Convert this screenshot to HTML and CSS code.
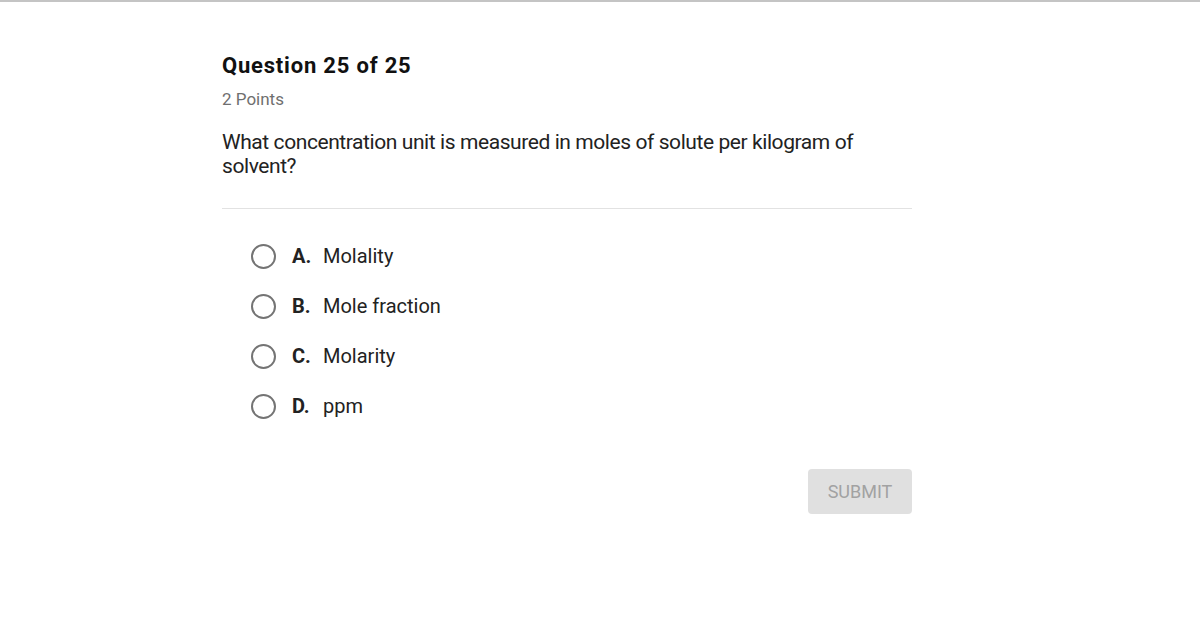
FILE: index.html
```html
<!DOCTYPE html>
<html>
<head>
<meta charset="utf-8">
<link rel="stylesheet" href="styles.css">
</head>
<body>
<div class="topline"></div>
<main class="quiz">
  <h1 class="title">Question 25 of 25</h1>
  <div class="points">2 Points</div>
  <p class="question">What concentration unit is measured in moles of solute per kilogram of solvent?</p>
  <hr class="divider">
  <ul class="options">
    <li class="option"><span class="radio"></span><span class="letter">A.</span><span class="answer">Molality</span></li>
    <li class="option"><span class="radio"></span><span class="letter">B.</span><span class="answer">Mole fraction</span></li>
    <li class="option"><span class="radio"></span><span class="letter">C.</span><span class="answer">Molarity</span></li>
    <li class="option"><span class="radio"></span><span class="letter">D.</span><span class="answer">ppm</span></li>
  </ul>
  <div class="actions"><button class="submit">SUBMIT</button></div>
</main>
</body>
</html>
```
FILE: styles.css
```css
html, body { margin: 0; padding: 0; background: #fff; }
body { font-family: Roboto, "Noto Sans", sans-serif; color: #212121; }
.topline { height: 2px; background: #c4c4c4; }
.quiz { width: 690px; margin-left: 222px; padding-top: 50px; }
.title { margin: 0; font-size: 22px; font-weight: 700; line-height: 28px; letter-spacing: 0.8px; color: #111; }
.points { margin-top: 8px; font-size: 17px; line-height: 22px; color: #6f6f6f; }
.question { margin: 20px 0 0; font-size: 21px; line-height: 24px; color: #222; letter-spacing: -0.42px; }
.divider { margin: 30px 0 0; border: 0; border-top: 1px solid #e2e2e2; }
.options { list-style: none; margin: 22px 0 0; padding: 0 0 0 29px; }
.option { display: flex; align-items: center; height: 50px; font-size: 20px; color: #222; }
.radio { width: 21px; height: 21px; border: 2px solid #747474; border-radius: 50%; flex: none; }
.letter { font-weight: 700; font-size: 20px; margin-left: 16px; width: 31px; }
.actions { display: flex; justify-content: flex-end; margin-top: 38px; }
.submit { width: 104px; height: 45px; border: 0; border-radius: 4px; background: #e0e0e0; color: #a2a2a2; font-family: Roboto, sans-serif; font-size: 18px; padding: 0; }
```
